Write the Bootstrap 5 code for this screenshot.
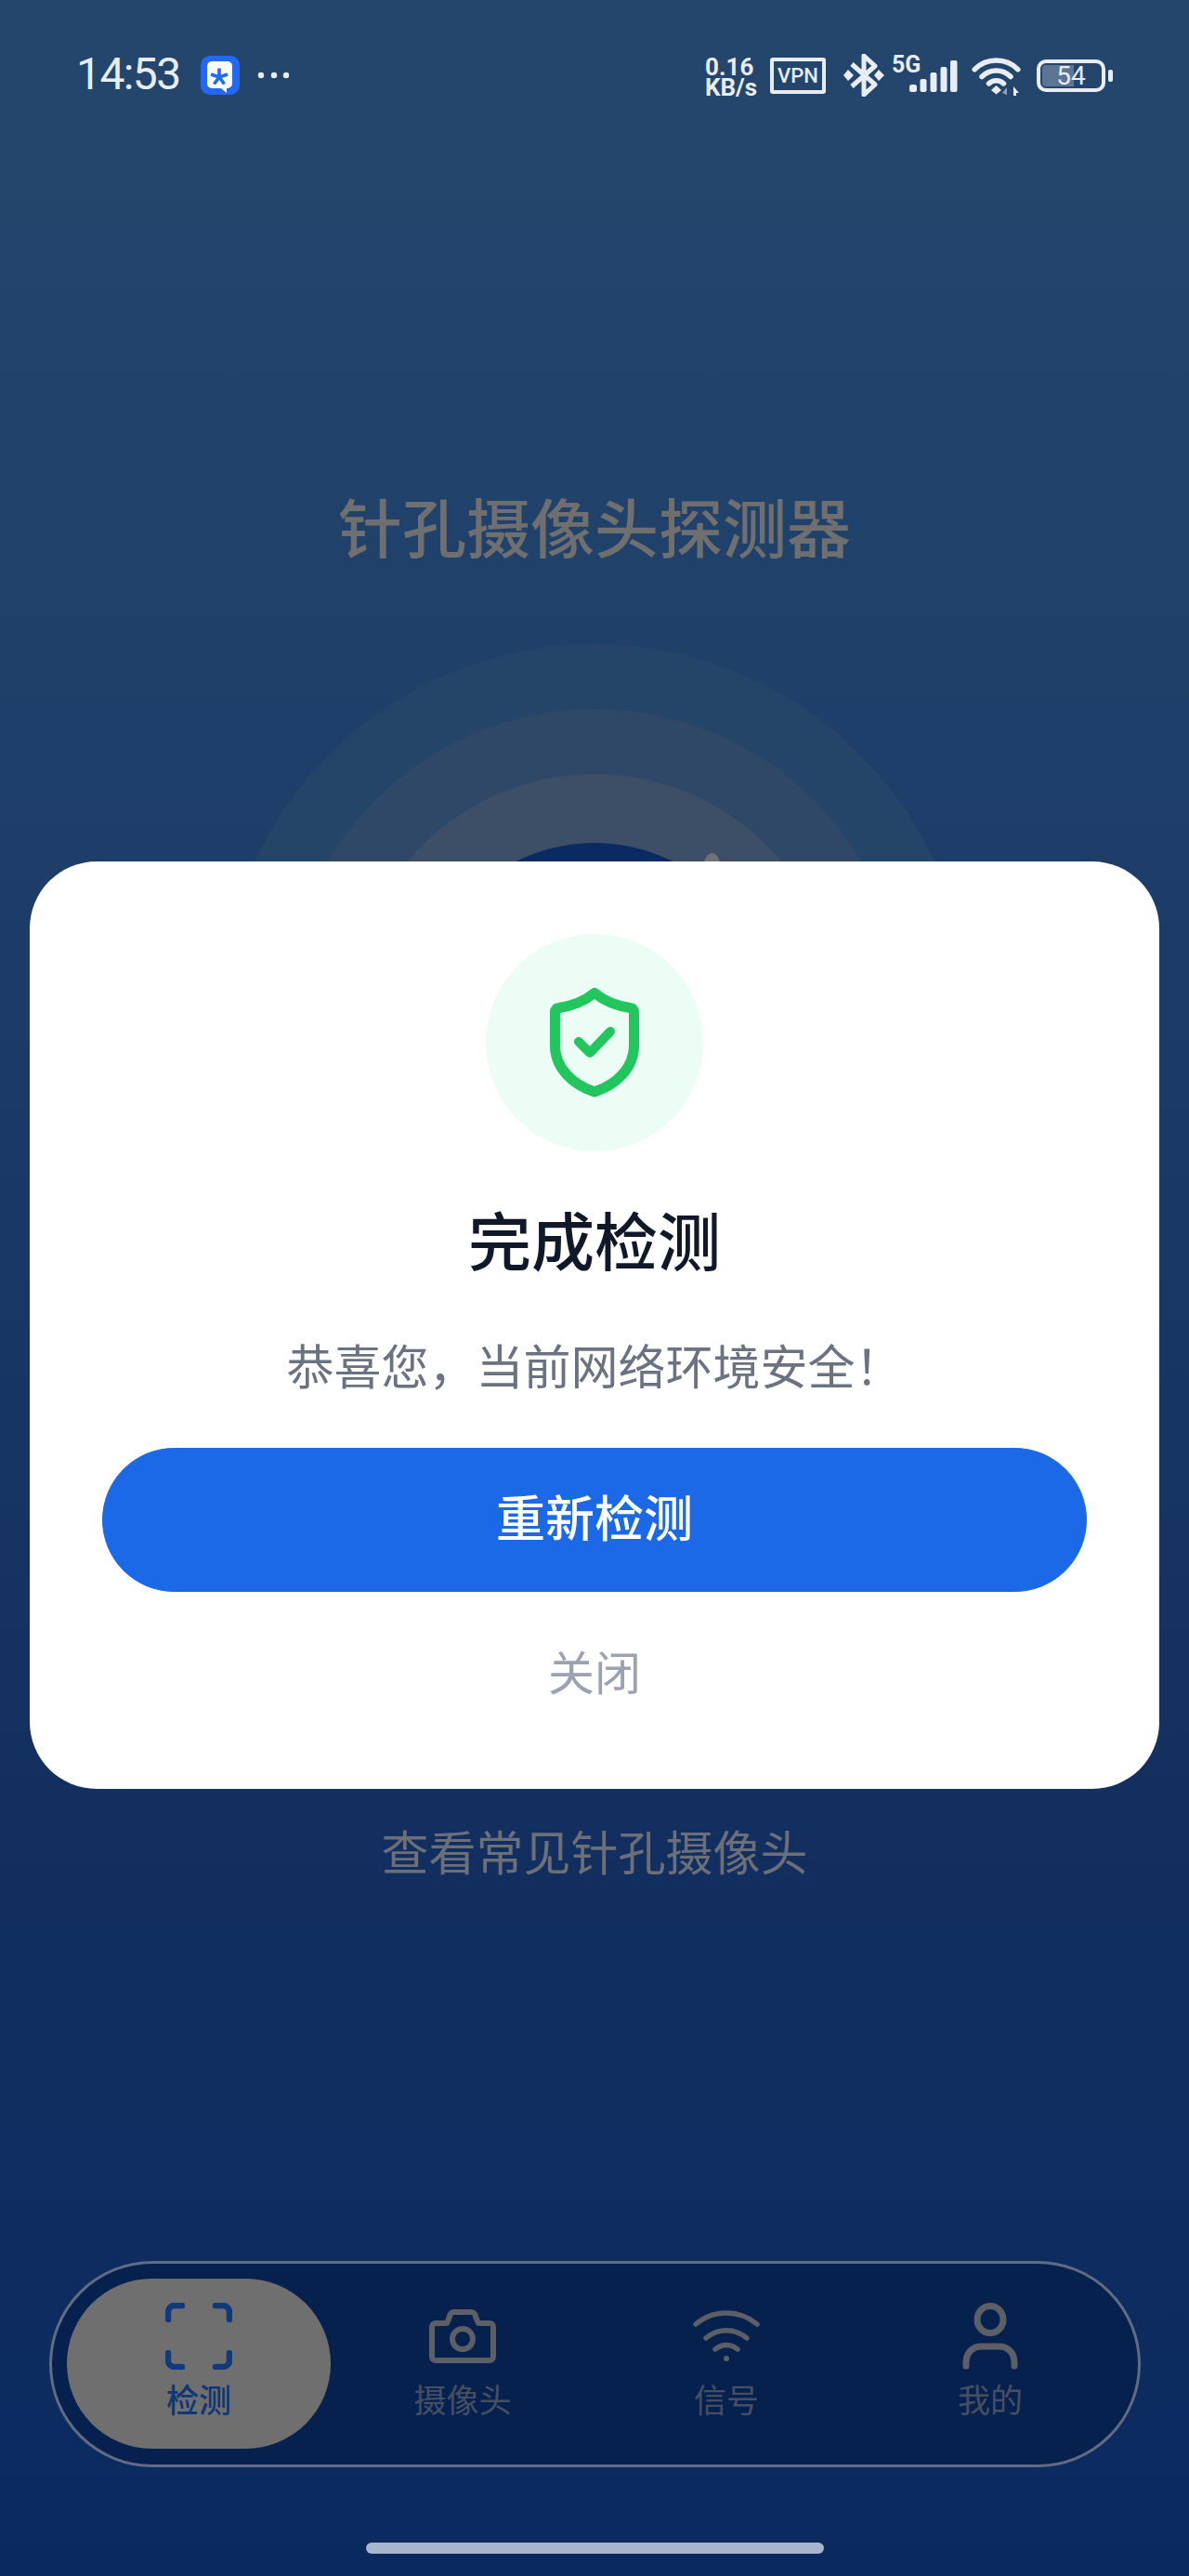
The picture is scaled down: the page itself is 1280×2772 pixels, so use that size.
<!DOCTYPE html>
<html lang="zh-CN">
  <head>
    <meta charset="UTF-8" />
    <meta name="viewport" content="width=device-width, initial-scale=1.0" />
    <title>针孔摄像头探测器</title>
    <link
      href="https://cdn.jsdelivr.net/npm/bootstrap@5.3.0/dist/css/bootstrap.min.css"
      rel="stylesheet"
    />
    <style>
      body {
        font-family: "Noto Sans CJK SC", "Noto Sans", sans-serif;
        margin: 0;
      }
      .phone-page {
        width: 1280px;
        height: 2772px;
        background: linear-gradient(180deg, #25466c 0%, #1e3f69 30%, #132f60 70%, #0a2a5f 100%);
      }
      .status-row {
        height: 120px;
        padding: 58px 82px 0 82px;
        color: #e8edf4;
        font-family: Roboto, sans-serif;
      }
      .status-time {
        font-size: 48px;
        font-weight: 400;
        line-height: 44px;
        letter-spacing: -1.6px;
        width: 134px;
      }
      .status-app {
        margin-top: 2px;
      }
      .status-dots {
        margin: 19px 0 0 19px;
      }
      .status-speed {
        font-size: 26px;
        font-weight: 700;
        line-height: 22px;
        width: 70px;
        margin-top: 3px;
      }
      .status-vpn {
        width: 60px;
        height: 39px;
        border: 4px solid #e8edf4;
        border-radius: 3px;
        font-size: 22px;
        font-weight: 500;
        line-height: 31px;
        text-align: center;
        margin-top: 4px;
      }
      .status-bt {
        margin-left: 19px;
      }
      .status-gen {
        width: 19px;
        margin: 3px 0 0 8px;
        font-size: 25px;
        font-weight: 700;
        line-height: 18px;
        white-space: nowrap;
      }
      .status-signal {
        margin-top: 7px;
      }
      .status-wifi {
        margin: 4px 0 0 15px;
      }
      .status-battery {
        width: 74px;
        height: 35px;
        border: 4px solid #e8edf4;
        border-radius: 10px;
        font-size: 28px;
        line-height: 27px;
        text-align: center;
        margin: 6px 0 0 16px;
        background: linear-gradient(90deg, #5c7593 0 54%, transparent 54%);
        background-clip: content-box;
        padding: 2px;
      }
      .status-battery span {
        display: block;
        margin-top: -2px;
      }
      .battery-tip {
        width: 5px;
        height: 13px;
        background: #e8edf4;
        border-radius: 2px;
        margin-top: 17px;
        margin-left: 3px;
      }
      .page-title {
        margin-top: 405px;
        font-size: 69px;
        font-weight: 500;
        line-height: 80px;
        color: #6f6f6f;
      }
      .radar-wrap {
        width: 806px;
        height: 806px;
        margin: 88px auto 0;
      }
      .radar-ring {
        border-radius: 50%;
      }
      .ring-a {
        width: 806px;
        height: 806px;
        background: #254568;
      }
      .ring-b {
        width: 666px;
        height: 666px;
        background: #2f4868;
      }
      .ring-c {
        width: 526px;
        height: 526px;
        background: #3c4f67;
      }
      .ring-d {
        width: 378px;
        height: 378px;
        background: #0c2a62;
      }
      .radar-blip {
        width: 19px;
        height: 34px;
        border-radius: 50%;
        background: #6f7276;
        left: 520px;
        top: 225px;
      }
      .common-link {
        margin-top: 462px;
        font-size: 51px;
        line-height: 60px;
        color: #6b6f78;
      }
      .bottom-nav {
        width: 1175px;
        height: 222px;
        margin: 412px 0 0 53px;
        padding: 16px;
        background: #07214f;
        border: 3px solid #606b84;
        border-radius: 111px;
      }
      .nav-cell {
        width: 284px;
        height: 183px;
        padding-top: 26px;
        border-radius: 92px;
        font-size: 35px;
        line-height: 40px;
        color: #454f63;
      }
      .nav-cell svg {
        display: block;
        margin-bottom: 11px;
      }
      .nav-cell.nav-on {
        background: #6f6f6f;
        color: #0f3676;
        font-weight: 500;
      }
      .home-bar {
        width: 493px;
        height: 12px;
        margin: 81px auto 0;
        background: #a9b5cd;
        border-radius: 6px;
      }
      .result-dialog {
        left: 32px;
        top: 927px;
        width: 1216px;
        height: 998px;
        padding: 78px 78px 0;
        border: 0;
        border-radius: 72px;
      }
      .result-badge {
        width: 234px;
        height: 234px;
        background: #ecfdf5;
      }
      .result-title {
        margin: 54px 0 0;
        font-size: 68px;
        font-weight: 500;
        line-height: 80px;
        color: #111827;
      }
      .result-text {
        margin: 60px 0 0;
        font-size: 51px;
        line-height: 70px;
        color: #6b7280;
        white-space: nowrap;
      }
      .retry-btn {
        height: 155px;
        margin-top: 55px;
        padding: 0 0 8px;
        font-size: 53px;
        font-weight: 500;
        background: #1c69e8;
        border-color: #1c69e8;
      }
      .close-btn {
        margin-top: 54px;
        font-size: 50px;
        line-height: 60px;
        color: #9ca3af;
        padding: 0;
        border: 0;
      }
    </style>
  </head>
  <body>
    <div class="phone-page position-relative overflow-hidden">
      <!-- status bar -->
      <div class="status-row d-flex">
        <div class="status-time">14:53</div>
        <svg width="42" height="42" viewBox="0 0 42 42" class="status-app flex-shrink-0">
          <rect width="42" height="42" rx="10" fill="#2468f2" />
          <path d="M12 6h17a5 5 0 0 1 5 5v19a5 5 0 0 1-5 5h-1v5l-6-5H12a5 5 0 0 1-5-5V11a5 5 0 0 1 5-5z" fill="#fff" />
          <path d="M20 23V13.500M20 23l9-3M20 23l-9-3M20 23l5.500 7.500M20 23l-5.500 7.500" stroke="#2468f2" stroke-width="3.600" />
        </svg>
        <svg width="36" height="8" viewBox="0 0 36 8" class="status-dots flex-shrink-0">
          <circle cx="4" cy="4" r="3.200" fill="#e8edf4" />
          <circle cx="18" cy="4" r="3.200" fill="#e8edf4" />
          <circle cx="31" cy="4" r="3.200" fill="#e8edf4" />
        </svg>
        <div class="ms-auto d-flex">
          <div class="status-speed">0.16<br />KB/s</div>
          <div class="status-vpn">VPN</div>
          <svg width="44" height="46" viewBox="0 0 44 46" class="status-bt flex-shrink-0">
            <path d="M9 11l25 22-12 11V2l12 11L9 35" fill="none" stroke="#e8edf4" stroke-width="5" stroke-linejoin="round" />
            <path d="M5 17l6 6-6 6-5-6zM38 17l6 6-6 6-5-6z" fill="#e8edf4" />
          </svg>
          <div class="status-gen">5G</div>
          <svg width="52" height="36" viewBox="0 0 52 36" class="status-signal flex-shrink-0">
            <rect y="26" width="8" height="8" rx="2.500" fill="#e8edf4" />
            <rect x="11.500" y="20" width="7" height="14" rx="2" fill="#e8edf4" />
            <rect x="22.500" y="13" width="7" height="21" rx="2" fill="#e8edf4" />
            <rect x="33.500" y="7" width="7" height="27" rx="2" fill="#e8edf4" />
            <rect x="44" y="0" width="7.500" height="34" rx="2" fill="#e8edf4" />
          </svg>
          <svg width="54" height="42" viewBox="0 0 54 42" class="status-wifi flex-shrink-0">
            <path d="M3.200 12.700A33 33 0 0 1 49.800 12.700M11 20.500A22 22 0 0 1 42 20.500M18.500 27.900A11.500 11.500 0 0 1 34.500 27.900" fill="none" stroke="#e8edf4" stroke-width="5.500" stroke-linecap="round" />
            <path d="M26.500 30l5.500 5-5.500 4.500-5.500-4.500z" fill="#e8edf4" />
            <path d="M38 40v-8l-5 6z" fill="#93a0b3" />
            <path d="M45 41v-10l6 7h-3v3z" fill="#e8edf4" />
          </svg>
          <div class="status-battery"><span>54</span></div>
          <div class="battery-tip"></div>
        </div>
      </div>

      <!-- page behind the dialog -->
      <div class="page-title text-center">针孔摄像头探测器</div>
      <div class="radar-wrap position-relative">
        <div class="radar-ring ring-a d-flex align-items-center justify-content-center">
          <div class="radar-ring ring-b d-flex align-items-center justify-content-center">
            <div class="radar-ring ring-c d-flex align-items-center justify-content-center">
              <div class="radar-ring ring-d"></div>
            </div>
          </div>
        </div>
        <div class="radar-blip position-absolute"></div>
      </div>
      <div class="common-link text-center">查看常见针孔摄像头</div>

      <!-- bottom tabs -->
      <div class="bottom-nav d-flex">
        <div class="nav-cell nav-on d-flex flex-column align-items-center">
          <svg width="72" height="72" viewBox="0 0 72 72" fill="none" stroke="#0f3a7d" stroke-width="6.500" stroke-linecap="round">
            <path d="M3 18V10a7 7 0 0 1 7-7h8M54 3h8a7 7 0 0 1 7 7v8M3 54v8a7 7 0 0 0 7 7h8M69 54v8a7 7 0 0 1-7 7h-8" />
          </svg>
          <span>检测</span>
        </div>
        <div class="nav-cell d-flex flex-column align-items-center">
          <svg width="72" height="72" viewBox="0 0 72 72" fill="none" stroke="#5c5f66" stroke-width="6" stroke-linejoin="round">
            <path d="M3 26a4 4 0 0 1 4-4h12l3-7a5 5 0 0 1 5-5h18a5 5 0 0 1 5 5l3 7h12a4 4 0 0 1 4 4v32a4 4 0 0 1-4 4H7a4 4 0 0 1-4-4z" />
            <circle cx="36" cy="39" r="11" />
          </svg>
          <span>摄像头</span>
        </div>
        <div class="nav-cell d-flex flex-column align-items-center">
          <svg width="72" height="72" viewBox="0 0 72 72" fill="none" stroke="#5c5f66" stroke-width="5.500" stroke-linecap="round">
            <path d="M3 23c19-16 47-16 66 0M14 38c13-11 31-11 44 0M24 50c7-6 17-6 24 0" />
            <circle cx="36" cy="60" r="3" fill="#5c5f66" stroke="none" />
          </svg>
          <span>信号</span>
        </div>
        <div class="nav-cell d-flex flex-column align-items-center">
          <svg width="72" height="72" viewBox="0 0 72 72" fill="none" stroke="#5c5f66" stroke-width="7" stroke-linecap="round">
            <ellipse cx="36" cy="18" rx="14" ry="14.500" />
            <path d="M10 68V64c0-11 8-17 16-17h20c8 0 16 6 16 17v4" />
          </svg>
          <span>我的</span>
        </div>
      </div>
      <div class="home-bar"></div>

      <!-- result dialog -->
      <div class="card result-dialog position-absolute align-items-center text-center">
        <div class="result-badge rounded-circle d-flex align-items-center justify-content-center">
          <svg width="96" height="118" viewBox="0 0 96 118" fill="none" stroke="#22c55e" stroke-width="11" stroke-linecap="round" stroke-linejoin="round">
            <path d="M48 5.500C40 12 27 19 10 21.500Q5.500 22 5.500 27V62C5.500 86 24 104 48 112C72 104 90.500 86 90.500 62V27Q90.500 22 86 21.500C69 19 56 12 48 5.500Z" />
            <path d="M31 58l12 12 22-23" stroke-width="10" />
          </svg>
        </div>
        <h2 class="result-title">完成检测</h2>
        <p class="result-text">恭喜您，当前网络环境安全！</p>
        <button type="button" class="btn btn-primary retry-btn w-100 rounded-pill">重新检测</button>
        <button type="button" class="btn close-btn">关闭</button>
      </div>
    </div>

    <script src="https://cdn.jsdelivr.net/npm/bootstrap@5.3.0/dist/js/bootstrap.bundle.min.js"></script>
  </body>
</html>
